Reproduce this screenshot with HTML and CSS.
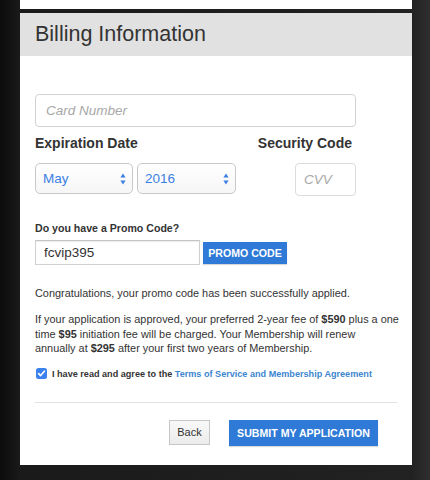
FILE: index.html
```html
<!DOCTYPE html>
<html>
<head>
<meta charset="utf-8">
<link rel="stylesheet" href="styles.css">
</head>
<body>
<div class="top-strip"></div>
<div class="panel">
  <div class="panel-header">Billing Information</div>
  <div class="panel-body">
    <div class="field card">
      <input class="text-input card-input" type="text" placeholder="Card Number">
    </div>
    <div class="exp-row">
      <div class="exp-col">
        <div class="label">Expiration Date</div>
        <div class="selects">
          <div class="select-wrap">
            <span class="select-value">May</span>
            <svg class="arrows" width="6" height="12" viewBox="0 0 6 12"><path d="M3 0.5 L5.6 4.6 L0.4 4.6 Z M3 11.5 L5.6 7.4 L0.4 7.4 Z" fill="#3b7fe3"/></svg>
          </div>
          <div class="select-wrap">
            <span class="select-value">2016</span>
            <svg class="arrows" width="6" height="12" viewBox="0 0 6 12"><path d="M3 0.5 L5.6 4.6 L0.4 4.6 Z M3 11.5 L5.6 7.4 L0.4 7.4 Z" fill="#3b7fe3"/></svg>
          </div>
        </div>
      </div>
      <div class="sec-col">
        <div class="label sec-label">Security Code</div>
        <input class="text-input cvv-input" type="text" placeholder="CVV">
      </div>
    </div>
    <div class="promo-label">Do you have a Promo Code?</div>
    <div class="promo-row">
      <input class="promo-input" type="text" value="fcvip395">
      <button class="btn-blue promo-btn">PROMO CODE</button>
    </div>
    <p class="msg">Congratulations, your promo code has been successfully applied.</p>
    <p class="msg fee">If your application is approved, your preferred 2-year fee of <b>$590</b> plus a one<br>time <b>$95</b> initiation fee will be charged. Your Membership will renew<br>annually at <b>$295</b> after your first two years of Membership.</p>
    <div class="agree">
      <span class="check"><svg width="11" height="11" viewBox="0 0 11 11"><path d="M2.6 5.6 L4.6 7.6 L8.4 3.2" stroke="#fff" stroke-width="1.6" fill="none" stroke-linecap="round" stroke-linejoin="round"/></svg></span>
      <span class="agree-text">I have read and agree to the <a class="link" href="#">Terms of Service and Membership Agreement</a></span>
    </div>
    <div class="divider"></div>
    <div class="actions">
      <button class="btn-back">Back</button>
      <button class="btn-blue submit-btn">SUBMIT MY APPLICATION</button>
    </div>
  </div>
</div>
</body>
</html>
```
FILE: styles.css
```css
html, body {
  margin: 0;
  padding: 0;
}
body {
  width: 430px;
  height: 480px;
  overflow: hidden;
  background: linear-gradient(to right, #0c0c0c 0px, #1a1a1a 20px, #222 412px, #2e2e2e 430px);
  font-family: "Liberation Sans", Arial, sans-serif;
  color: #333;
}
.top-strip {
  margin: 0 18px 0 20px;
  height: 9px;
  background: #fff;
}
.panel {
  margin: 4px 18px 0 20px;
  width: 392px;
}
.panel-header {
  height: 43px;
  background: #e1e1e1;
  display: flex;
  align-items: center;
  padding-left: 15px;
  font-size: 21.5px;
  color: #333;
}
.panel-body {
  background: #fff;
  padding: 38px 15px 19px 15px;
}
.text-input {
  box-sizing: border-box;
  border: 1px solid #d2d2d2;
  border-radius: 4px;
  background: #fff;
  font-family: "Liberation Sans", Arial, sans-serif;
  font-size: 13.5px;
  color: #333;
  outline: none;
  margin: 0;
  display: block;
}
.text-input::placeholder {
  font-style: italic;
  color: #a8a8a8;
}
.card-input {
  width: 321px;
  height: 33px;
  padding: 0 10px;
}
.exp-row {
  display: flex;
  margin-top: 8px;
  width: 321px;
  justify-content: space-between;
}
.label {
  font-weight: bold;
  font-size: 14px;
  line-height: 16px;
  color: #333;
}
.selects {
  display: flex;
  gap: 4px;
  margin-top: 12px;
}
.select-wrap {
  position: relative;
  box-sizing: border-box;
  width: 98px;
  height: 31px;
  border: 1px solid #c8c8c8;
  border-radius: 5px;
  background: linear-gradient(#fff, #f6f6f6);
  display: flex;
  align-items: center;
  padding-left: 7px;
}
.select-wrap + .select-wrap {
  width: 99px;
}
.select-value {
  font-size: 13.5px;
  color: #3b7fe3;
}
.arrows {
  position: absolute;
  right: 6px;
  top: 9px;
}
.sec-col {
  display: flex;
  flex-direction: column;
  align-items: flex-end;
}
.sec-label {
  margin-right: 4px;
}
.cvv-input {
  width: 61px;
  height: 33px;
  margin-top: 12px;
  padding: 0 8px;
  border-color: #dcdcdc;
}
.promo-label {
  margin-top: 26px;
  font-weight: bold;
  font-size: 10.6px;
  line-height: 13px;
}
.promo-row {
  display: flex;
  align-items: center;
  margin-top: 5px;
}
.promo-input {
  box-sizing: border-box;
  width: 165px;
  height: 25px;
  border: 1px solid #d0d0d0;
  border-top-color: #c4c4c4;
  box-shadow: inset 0 1px 1px rgba(0,0,0,0.08);
  padding: 0 8px;
  font-family: "Liberation Sans", Arial, sans-serif;
  font-size: 13.5px;
  color: #333;
  outline: none;
  margin: 0;
}
.btn-blue {
  background: #2f7ad6;
  color: #fff;
  border: 0;
  font-family: "Liberation Sans", Arial, sans-serif;
  font-weight: bold;
  font-size: 10.6px;
  margin: 0;
  padding: 0;
  box-shadow: 0 1px 1px rgba(0,0,0,0.15);
}
.promo-btn {
  width: 84px;
  height: 22px;
  margin-left: 3px;
}
.msg {
  margin: 21px 0 0 0;
  font-size: 10.9px;
  line-height: 14.6px;
  color: #333;
}
.msg.fee {
  margin-top: 11.4px;
  white-space: nowrap;
}
.agree {
  display: flex;
  align-items: center;
  margin-top: 11px;
  height: 14px;
}
.check {
  width: 11px;
  height: 11px;
  border-radius: 2.5px;
  background: #3a82f0;
  display: flex;
  margin-left: 1px;
}
.agree-text {
  margin-left: 5px;
  font-weight: bold;
  font-size: 9.1px;
  color: #333;
}
.link {
  color: #3b86cf;
  text-decoration: none;
}
.divider {
  margin-top: 21px;
  height: 1px;
  background: #e2e2e2;
}
.actions {
  display: flex;
  justify-content: flex-end;
  gap: 19px;
  padding-right: 19px;
  margin-top: 17px;
}
.btn-back {
  box-sizing: border-box;
  width: 41px;
  height: 25px;
  border: 1px solid #c6c6c6;
  background: linear-gradient(#f8f8f8, #ececec);
  font-family: "Liberation Sans", Arial, sans-serif;
  font-size: 11px;
  color: #333;
  margin: 0;
  padding: 0;
}
.submit-btn {
  width: 149px;
  height: 26px;
}
```
